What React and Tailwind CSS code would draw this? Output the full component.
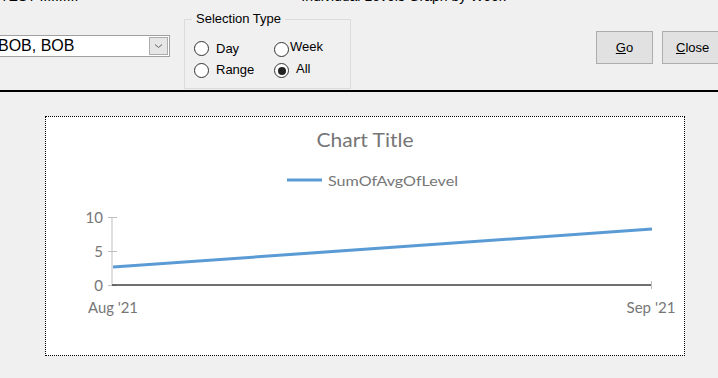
import React from "react";

const WIN_FONT = { fontFamily: '"Liberation Sans", Arial, sans-serif' };
const CHART_FONT = '"Lato", "Open Sans", sans-serif';

function Radio({ checked }) {
  return (
    <span className="inline-flex w-[15px] h-[15px] rounded-full border border-[#333] bg-white items-center justify-center shrink-0">
      {checked && <span className="w-[8px] h-[8px] rounded-full bg-[#222]" />}
    </span>
  );
}

function LevelsChart() {
  return (
    <svg width="638" height="238" viewBox="0 0 638 238" className="block">
      <text x="319" y="30" textAnchor="middle" fontFamily={CHART_FONT} fontSize="19" fill="#767676" textLength="97" lengthAdjust="spacingAndGlyphs">
        Chart Title
      </text>
      <line x1="241" y1="63" x2="276" y2="63" stroke="#5b9bd5" strokeWidth="3" />
      <text x="282" y="69" fontFamily={CHART_FONT} fontSize="14" fill="#767676" textLength="130" lengthAdjust="spacingAndGlyphs">
        SumOfAvgOfLevel
      </text>

      {/* y axis */}
      <line x1="66" y1="100" x2="66" y2="168" stroke="#bfbfbf" strokeWidth="1" />
      <line x1="62" y1="100.5" x2="71" y2="100.5" stroke="#bfbfbf" strokeWidth="1" />
      <line x1="62" y1="134.5" x2="71" y2="134.5" stroke="#bfbfbf" strokeWidth="1" />
      <line x1="62" y1="168.5" x2="71" y2="168.5" stroke="#bfbfbf" strokeWidth="1" />
      <g fontFamily={CHART_FONT} fontSize="15" fill="#767676" textAnchor="end">
        <text x="57" y="106">10</text>
        <text x="57" y="140">5</text>
        <text x="57" y="174">0</text>
      </g>

      {/* x axis */}
      <line x1="66" y1="168" x2="605" y2="168" stroke="#404040" strokeWidth="1.5" />
      <line x1="605.5" y1="164" x2="605.5" y2="172" stroke="#bfbfbf" strokeWidth="1" />
      <g fontFamily={CHART_FONT} fontSize="15" fill="#767676" textAnchor="middle">
        <text x="67" y="196" textLength="50" lengthAdjust="spacingAndGlyphs">Aug '21</text>
        <text x="605" y="196" textLength="49" lengthAdjust="spacingAndGlyphs">Sep '21</text>
      </g>

      {/* series */}
      <line x1="67" y1="150" x2="606" y2="112" stroke="#5b9bd5" strokeWidth="3" />
    </svg>
  );
}

export default function App() {
  return (
    <div className="w-[718px] h-[378px] bg-[#f0f0f0] overflow-hidden text-black" style={WIN_FONT}>
      {/* form header */}
      <div className="h-[90px] flex flex-col overflow-hidden">
        <div className="h-[4px] flex text-[14px] leading-[14px] text-black">
          <span className="-mt-[11px] whitespace-nowrap shrink-0">TEST ::::::::::</span>
          <span className="-mt-[11px] ml-[223px] whitespace-nowrap shrink-0">Individual Levels Graph by Week</span>
        </div>

        <div className="flex items-start">
          {/* combo box */}
          <div className="shrink-0 -ml-[4px] mt-[31px] w-[174px] h-[22px] flex bg-white border border-[#a0a0a0]">
            <span className="flex-1 text-[16px] leading-[20px] pl-[1px] whitespace-nowrap">BOB, BOB</span>
            <span className="w-[19px] h-[18px] mt-[1px] mr-[1px] bg-[#e6e6e6] border border-[#acacac] flex items-center justify-center">
              <svg width="9" height="6" viewBox="0 0 9 6">
                <path d="M1 1.5 L4.5 4.5 L8 1.5" fill="none" stroke="#606060" strokeWidth="1" />
              </svg>
            </span>
          </div>

          {/* option group */}
          <div className="shrink-0 relative ml-[14px] mt-[15px] w-[167px] h-[70px] border border-[#dcdcdc] text-[13px]">
            <span className="absolute -top-[9px] left-[7px] px-[4px] bg-[#f0f0f0] leading-[16px]">Selection Type</span>
            <div className="flex pl-[9px] pt-[21px]">
              <div className="flex flex-col gap-[7px] w-[80px]">
                <label className="flex items-center gap-[7px] h-[15px] leading-[15px]"><Radio />Day</label>
                <label className="flex items-center gap-[7px] h-[15px] leading-[15px]"><Radio /><span className="relative -top-[1px]">Range</span></label>
              </div>
              <div className="flex flex-col gap-[7px]">
                <label className="flex items-center gap-[1px] h-[15px] leading-[15px] relative top-[1px]">
                  <Radio />
                  <span className="relative -top-[3px]">Week</span>
                </label>
                <label className="flex items-center gap-[7px] h-[15px] leading-[15px]"><Radio checked /><span className="relative -top-[2px]">All</span></label>
              </div>
            </div>
          </div>

          {/* buttons */}
          <div className="shrink-0 ml-[245px] mt-[27px] flex gap-[9px] text-[13px]">
            <button className="shrink-0 w-[57px] h-[33px] bg-[#e1e1e1] border border-[#adadad] flex items-center justify-center">
              <span><span className="underline">G</span>o</span>
            </button>
            <button className="shrink-0 w-[60px] h-[33px] bg-[#e1e1e1] border border-[#adadad] flex items-center justify-start pl-[13px]">
              <span><span className="underline">C</span>lose</span>
            </button>
          </div>
        </div>
      </div>

      <div className="h-[2px] bg-black" />

      {/* chart */}
      <div className="ml-[45px] mt-[24px] w-[640px] h-[240px] bg-white border border-dotted border-black">
        <LevelsChart />
      </div>
    </div>
  );
}
